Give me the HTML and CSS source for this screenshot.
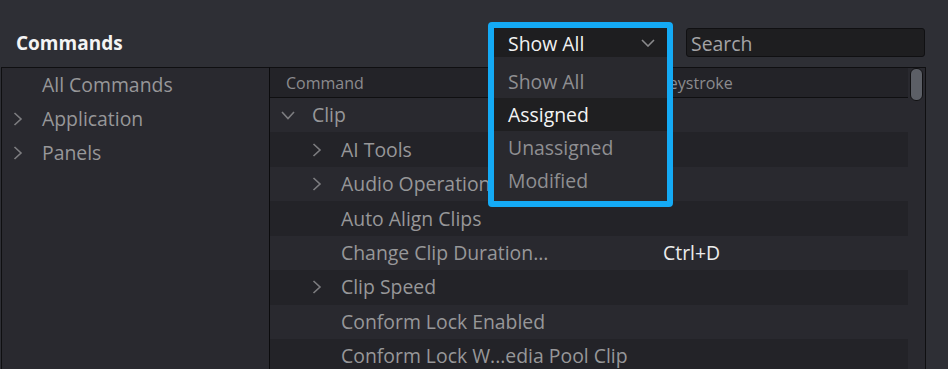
FILE: index.html
```html
<!DOCTYPE html>
<html lang="en">
<head>
<meta charset="utf-8">
<title>Commands</title>
<link rel="stylesheet" href="styles.css">
</head>
<body>
<div class="app">
  <header class="topbar">
    <h1 class="title">Commands</h1>
    <div class="combo-wrap">
      <div class="combo">
        <span class="combo-text">Show All</span>
        <svg class="combo-chev" width="14" height="8" viewBox="0 0 14 8"><polyline points="1,1 7,7 13,1" fill="none" stroke="#8a8a8c" stroke-width="1.6"/></svg>
      </div>
      <ul class="popup">
        <li class="opt">Show All</li>
        <li class="opt opt-active">Assigned</li>
        <li class="opt">Unassigned</li>
        <li class="opt">Modified</li>
      </ul>
      <div class="ring"></div>
    </div>
    <div class="search"><span class="search-ph">Search</span></div>
  </header>

  <main class="main">
    <nav class="side">
      <div class="side-row"><span class="chev-box"></span><span>All Commands</span></div>
      <div class="side-row"><span class="chev-box"><svg width="10" height="14" viewBox="0 0 10 14"><polyline points="1.5,1 8,7 1.5,13" fill="none" stroke="#7d7d80" stroke-width="1.6"/></svg></span><span>Application</span></div>
      <div class="side-row"><span class="chev-box"><svg width="10" height="14" viewBox="0 0 10 14"><polyline points="1.5,1 8,7 1.5,13" fill="none" stroke="#7d7d80" stroke-width="1.6"/></svg></span><span>Panels</span></div>
    </nav>

    <section class="table">
      <div class="cols">
        <div class="thead">
          <div class="th">Command</div>
          <div class="th th-key">Keystroke</div>
        </div>
        <div class="row">
          <div class="cell d0"><span class="chev-box"><svg width="14" height="9" viewBox="0 0 14 9"><polyline points="1,1 7,7.5 13,1" fill="none" stroke="#7d7d80" stroke-width="1.6"/></svg></span><span>Clip</span></div>
          <div class="key"></div>
        </div>
        <div class="row dark">
          <div class="cell d1"><span class="chev-box"><svg width="10" height="14" viewBox="0 0 10 14"><polyline points="1.5,1 8,7 1.5,13" fill="none" stroke="#7d7d80" stroke-width="1.6"/></svg></span><span>AI Tools</span></div>
          <div class="key"></div>
        </div>
        <div class="row">
          <div class="cell d1"><span class="chev-box"><svg width="10" height="14" viewBox="0 0 10 14"><polyline points="1.5,1 8,7 1.5,13" fill="none" stroke="#7d7d80" stroke-width="1.6"/></svg></span><span>Audio Operations</span></div>
          <div class="key"></div>
        </div>
        <div class="row dark">
          <div class="cell d1"><span class="chev-box"></span><span>Auto Align Clips</span></div>
          <div class="key"></div>
        </div>
        <div class="row">
          <div class="cell d1"><span class="chev-box"></span><span>Change Clip Duration...</span></div>
          <div class="key">Ctrl+D</div>
        </div>
        <div class="row dark">
          <div class="cell d1"><span class="chev-box"><svg width="10" height="14" viewBox="0 0 10 14"><polyline points="1.5,1 8,7 1.5,13" fill="none" stroke="#7d7d80" stroke-width="1.6"/></svg></span><span>Clip Speed</span></div>
          <div class="key"></div>
        </div>
        <div class="row">
          <div class="cell d1"><span class="chev-box"></span><span>Conform Lock Enabled</span></div>
          <div class="key"></div>
        </div>
        <div class="row dark">
          <div class="cell d1"><span class="chev-box"></span><span>Conform Lock W...edia Pool Clip</span></div>
          <div class="key"></div>
        </div>
      </div>
      <div class="gutter"><div class="thumb"></div></div>
    </section>
  </main>
</div>
</body>
</html>
```

FILE: styles.css
```css
* { box-sizing: border-box; }
html, body {
  margin: 0;
  padding: 0;
  background: #2e2f35;
  font-family: "Open Sans", "Noto Sans", "Liberation Sans", sans-serif;
  color: #979799;
  overflow: hidden;
}
.app {
  width: 948px;
  height: 369px;
  display: flex;
  flex-direction: column;
}
.topbar {
  height: 67px;
  display: flex;
  align-items: center;
  padding: 28px 23px 10px 16px;
}
.title {
  margin: 0;
  font-size: 19px;
  font-weight: 700;
  color: #f4f4f4;
  flex: 1;
  line-height: 29px;
  padding-top: 2px;
}
.combo-wrap {
  position: relative;
  width: 173px;
  height: 29px;
  margin-right: 19px;
}
.combo {
  height: 29px;
  background: #1e1e20;
  display: flex;
  align-items: center;
  padding-left: 14px;
  padding-right: 12px;
}
.combo-text {
  flex: 1;
  font-size: 19.4px;
  color: #f2f2f2;
  line-height: 29px;
  padding-top: 1px;
}
.combo-chev { display: block; margin-top: 1px; }
.popup {
  position: absolute;
  left: 0;
  top: 29px;
  width: 173px;
  height: 144px;
  margin: 0;
  padding: 8px 0 0 0;
  list-style: none;
  background: #29292e;
  z-index: 5;
}
.opt {
  height: 33px;
  line-height: 33px;
  padding-left: 14px;
  font-size: 19.4px;
  color: #8f8f92;
}
.opt-active {
  background: #1f1f21;
  color: #f4f4f4;
}
.ring {
  position: absolute;
  left: -6px;
  top: -6px;
  width: 185px;
  height: 185px;
  border: 6px solid #14aaf5;
  border-radius: 4px;
  z-index: 6;
  pointer-events: none;
}
.search {
  width: 239px;
  height: 29px;
  background: #1e1e20;
  border: 1px solid #101012;
  border-radius: 3px;
  padding-left: 4px;
  display: flex;
  align-items: center;
}
.search-ph {
  font-size: 19.4px;
  color: #a4a4a6;
  line-height: 27px;
  padding-top: 1px;
}
.main {
  flex: 1;
  display: flex;
  min-height: 0;
}
.side {
  margin-left: 1px;
  width: 269px;
  background: #29292f;
  border-left: 1px solid #0f0f11;
  border-top: 1px solid #0f0f11;
  border-right: 1px solid #0b0b0d;
}
.side-row {
  height: 34px;
  display: flex;
  align-items: center;
  padding-left: 8px;
  font-size: 19.4px;
  line-height: 34px;
  color: #979799;
}
.chev-box {
  width: 16px;
  height: 16px;
  margin-right: 16px;
  display: flex;
  align-items: center;
  justify-content: center;
  flex: none;
}
.chev-box svg { display: block; }
.table {
  width: 656px;
  display: flex;
  background: #29292f;
  border-top: 1px solid #0f0f11;
  border-right: 1px solid #0f0f11;
}
.cols {
  width: 638px;
  display: flex;
  flex-direction: column;
}
.thead {
  height: 30px;
  display: grid;
  grid-template-columns: 373px 1fr;
  background: #232328;
  border-bottom: 1px solid #0f0f11;
  flex: none;
}
.th {
  padding-left: 16px;
  font-size: 16px;
  line-height: 30px;
  color: #8b8b8e;
}
.row {
  height: 34.45px;
  display: grid;
  grid-template-columns: 373px 1fr;
  align-items: center;
  flex: none;
}
.row.dark { background: #232328; }
.cell {
  display: flex;
  align-items: center;
  font-size: 19.4px;
  line-height: 34px;
  color: #979799;
  white-space: nowrap;
}
.cell.d0 { padding-left: 10px; }
.cell.d1 { padding-left: 39px; }
.key {
  padding-left: 20px;
  font-size: 19.4px;
  line-height: 34px;
  color: #ececec;
}
.gutter {
  width: 17px;
  padding: 0 1px 0 2px;
}
.thumb {
  width: 13px;
  height: 33px;
  background: #5c5f66;
  border: 1px solid #111113;
  border-radius: 6px;
}
```
